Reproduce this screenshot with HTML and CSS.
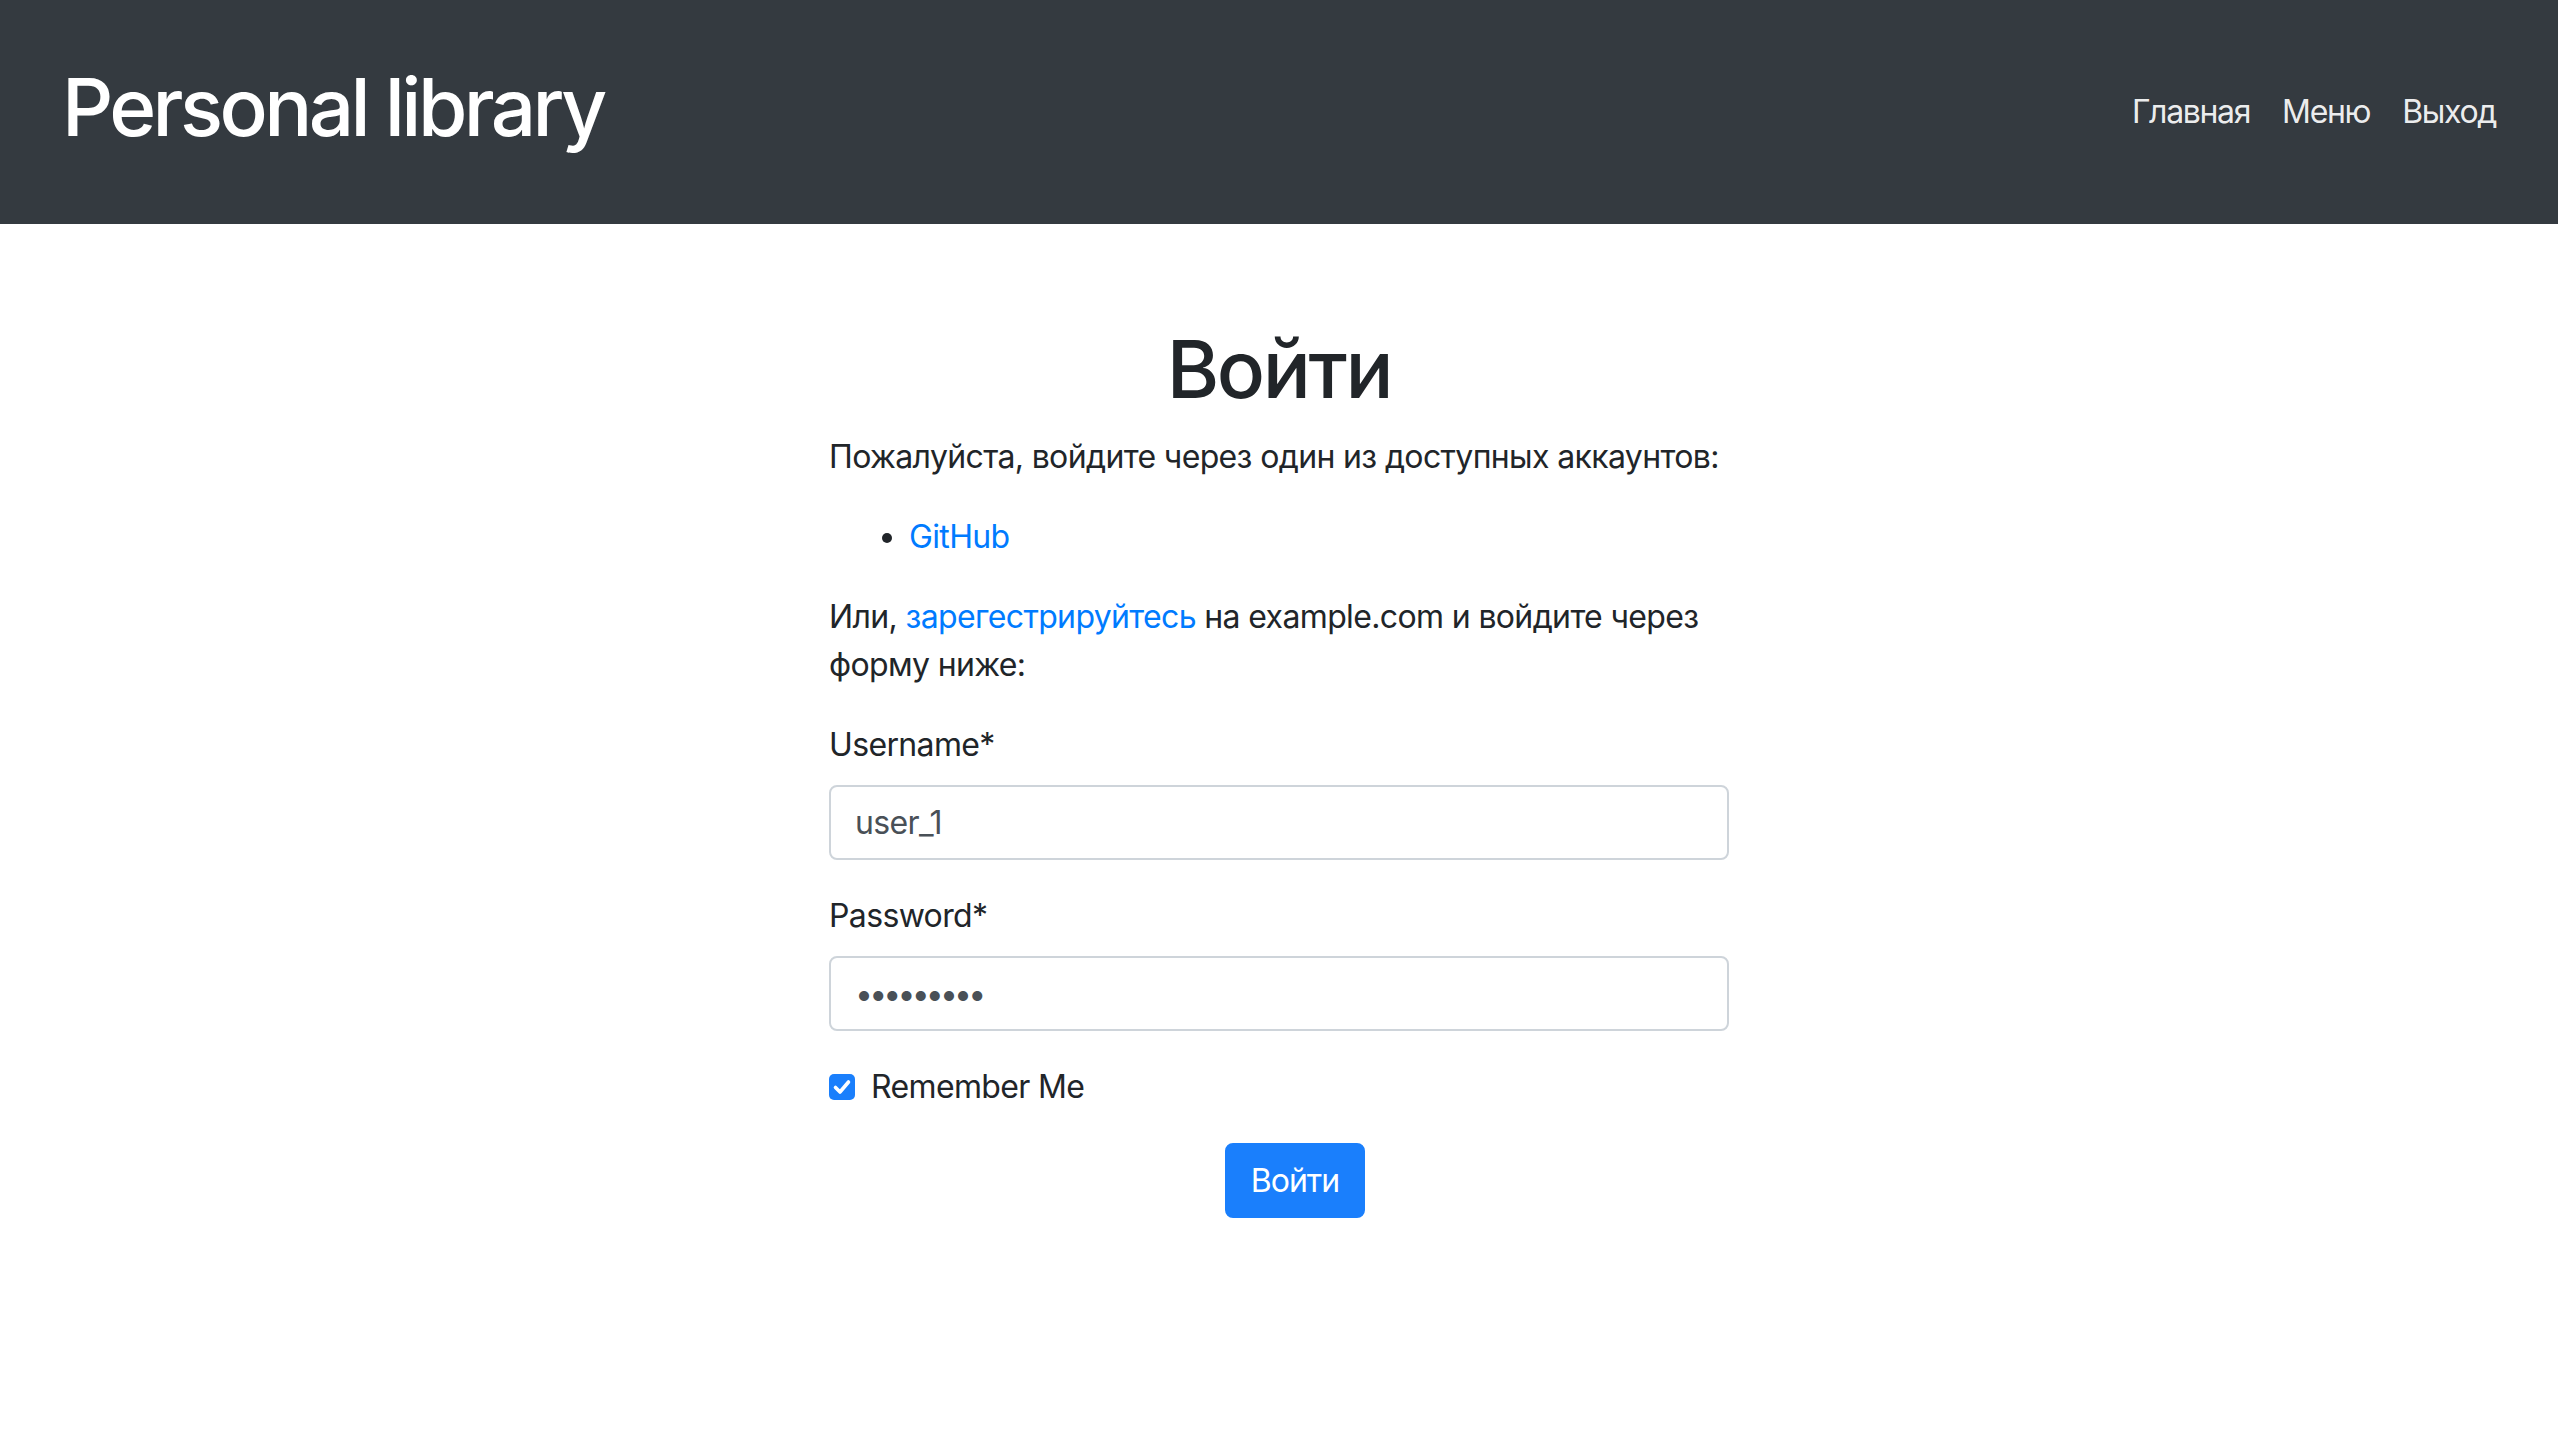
FILE: index.html
```html
<!DOCTYPE html>
<html lang="ru">
<head>
<meta charset="utf-8">
<title>Personal library</title>
<link rel="stylesheet" href="styles.css">
</head>
<body>
<header class="navbar">
  <a class="brand" href="#">Personal library</a>
  <nav class="nav">
    <a class="nav-link" href="#">Главная</a>
    <a class="nav-link" href="#">Меню</a>
    <a class="nav-link" href="#">Выход</a>
  </nav>
</header>
<main class="content">
  <h1 class="title">Войти</h1>
  <p class="para">Пожалуйста, войдите через один из доступных аккаунтов:</p>
  <ul class="providers">
    <li><a class="link" href="#">GitHub</a></li>
  </ul>
  <p class="para">Или, <a class="link" href="#">зарегестрируйтесь</a> на example.com и войдите через форму ниже:</p>
  <form class="login-form">
    <div class="form-group">
      <label class="form-label" for="username">Username*</label>
      <input class="form-control" id="username" type="text" value="user_1">
    </div>
    <div class="form-group">
      <label class="form-label" for="password">Password*</label>
      <input class="form-control password" id="password" type="password" value="123456789">
    </div>
    <label class="check-row">
      <span class="checkbox"><svg viewBox="0 0 26 26" width="26" height="26"><path d="M6.5 13.5 L11 18 L19.5 8" fill="none" stroke="#fff" stroke-width="3.6" stroke-linecap="round" stroke-linejoin="round"/></svg></span>
      <span class="check-text">Remember Me</span>
    </label>
    <div class="actions">
      <button class="btn" type="button">Войти</button>
    </div>
  </form>
</main>
</body>
</html>
```

FILE: styles.css
```css
html, body {
  margin: 0;
  padding: 0;
}
body {
  font-family: Inter, "Noto Sans", "Liberation Sans", sans-serif;
  font-size: 32px;
  line-height: 48px;
  letter-spacing: -0.02em;
  color: #212529;
  background: #fff;
}
a {
  text-decoration: none;
}
.navbar {
  height: 224px;
  box-sizing: border-box;
  background: #343a40;
  display: flex;
  align-items: center;
  justify-content: space-between;
  padding: 0 46px 0 62px;
}
.brand {
  color: #fff;
  font-size: 80px;
  line-height: 96px;
  font-weight: 500;
  margin-bottom: 10px;
  letter-spacing: -0.045em;
}
.nav {
  display: flex;
}
.nav-link {
  color: rgba(255, 255, 255, 0.93);
  padding: 0 16px;
  line-height: 48px;
  letter-spacing: -0.042em;
}
.content {
  width: 900px;
  margin: 0 auto;
  padding-top: 97px;
}
.title {
  margin: 0 0 16px;
  text-align: center;
  font-size: 80px;
  line-height: 96px;
  font-weight: 500;
  letter-spacing: -0.03em;
}
.para {
  margin: 0 0 32px;
}
.providers {
  margin: 0 0 32px;
  padding-left: 80px;
}
.link {
  color: #007bff;
}
.form-group {
  margin-bottom: 32px;
}
.form-label {
  display: block;
  margin-bottom: 16px;
}
.form-control {
  display: block;
  box-sizing: border-box;
  width: 100%;
  height: 75px;
  padding: 12px 24px;
  font-family: inherit;
  font-size: 32px;
  line-height: 48px;
  letter-spacing: -0.02em;
  color: #495057;
  background: #fff;
  border: 2px solid #ced4da;
  border-radius: 8px;
  outline: none;
}
.password {
  letter-spacing: -0.12em;
}
.check-row {
  display: flex;
  align-items: center;
  gap: 16px;
}
.checkbox {
  width: 26px;
  height: 26px;
  border-radius: 5px;
  background: #1a7ffc;
  display: flex;
}
.actions {
  display: flex;
  justify-content: center;
  padding-left: 32px;
  margin-top: 32px;
}
.btn {
  font-family: inherit;
  font-size: 32px;
  line-height: 48px;
  letter-spacing: -0.03em;
  color: #fff;
  background: #1a7ffc;
  border: 2px solid #1a7ffc;
  border-radius: 8px;
  padding: 11px 24px;
  height: 75px;
  cursor: pointer;
}
```
